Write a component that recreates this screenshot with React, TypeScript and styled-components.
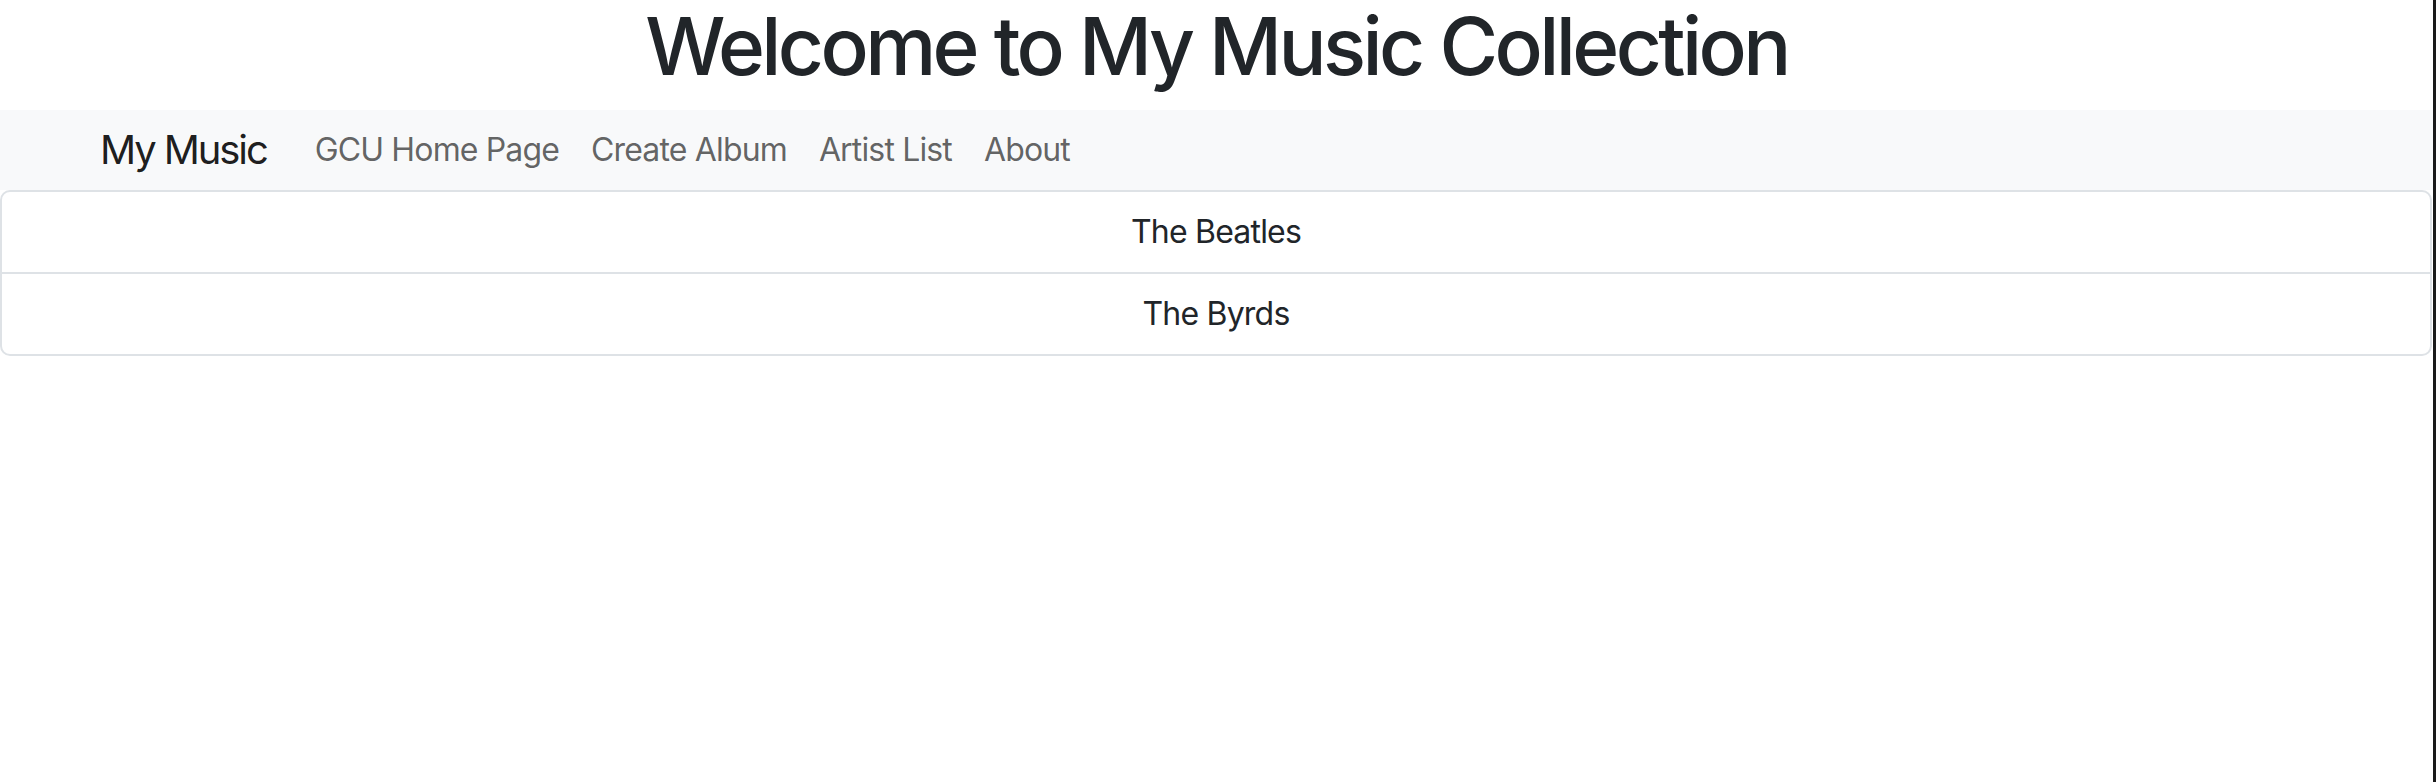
import React from "react";
import styled, { createGlobalStyle } from "styled-components";

const GlobalStyle = createGlobalStyle`
  html, body {
    margin: 0;
    padding: 0;
    background: #ffffff;
  }
  body {
    font-family: Inter, "Noto Sans", "Liberation Sans", sans-serif;
    color: #212529;
    -webkit-font-smoothing: antialiased;
  }
  * { box-sizing: border-box; }
`;

const Page = styled.div`
  min-height: 782px;
  border-right: 3px solid #1a1a1a;
  display: flex;
  flex-direction: column;
`;

const Title = styled.h1`
  margin: 0;
  height: 110px;
  font-size: 80px;
  font-weight: 500;
  line-height: 92px;
  text-align: center;
  color: #212529;
  letter-spacing: -3.6px;
`;

const NavBar = styled.nav`
  height: 80px;
  background: #f8f9fa;
  display: flex;
  align-items: center;
  padding-left: 100px;
`;

const Brand = styled.a`
  font-size: 40px;
  line-height: 60px;
  color: rgba(0, 0, 0, 0.9);
  margin-right: 32px;
  letter-spacing: -2.1px;
  text-decoration: none;
`;

const NavList = styled.ul`
  display: flex;
  list-style: none;
  margin: 0;
  padding: 0;
`;

const NavLink = styled.a`
  display: block;
  padding: 16px;
  font-size: 32px;
  line-height: 48px;
  letter-spacing: -0.85px;
  color: rgba(0, 0, 0, 0.62);
  text-decoration: none;
`;

const ArtistList = styled.ul`
  list-style: none;
  margin: 0;
  padding: 0;
  border: 2px solid #dee2e6;
  border-radius: 10px;
  margin-right: 1px;
`;

const ArtistItem = styled.li`
  padding: 16px 32px;
  font-size: 32px;
  line-height: 48px;
  letter-spacing: -0.8px;
  text-align: center;
  color: #212529;
  & + & {
    border-top: 2px solid #dee2e6;
  }
`;

const links = ["GCU Home Page", "Create Album", "Artist List", "About"];
const artists = ["The Beatles", "The Byrds"];

export default function App() {
  return (
    <>
      <GlobalStyle />
      <Page>
        <Title>Welcome to My Music Collection</Title>
        <NavBar>
          <Brand href="#">My Music</Brand>
          <NavList>
            {links.map((l) => (
              <li key={l}>
                <NavLink href="#">{l}</NavLink>
              </li>
            ))}
          </NavList>
        </NavBar>
        <ArtistList>
          {artists.map((a) => (
            <ArtistItem key={a}>{a}</ArtistItem>
          ))}
        </ArtistList>
      </Page>
    </>
  );
}
